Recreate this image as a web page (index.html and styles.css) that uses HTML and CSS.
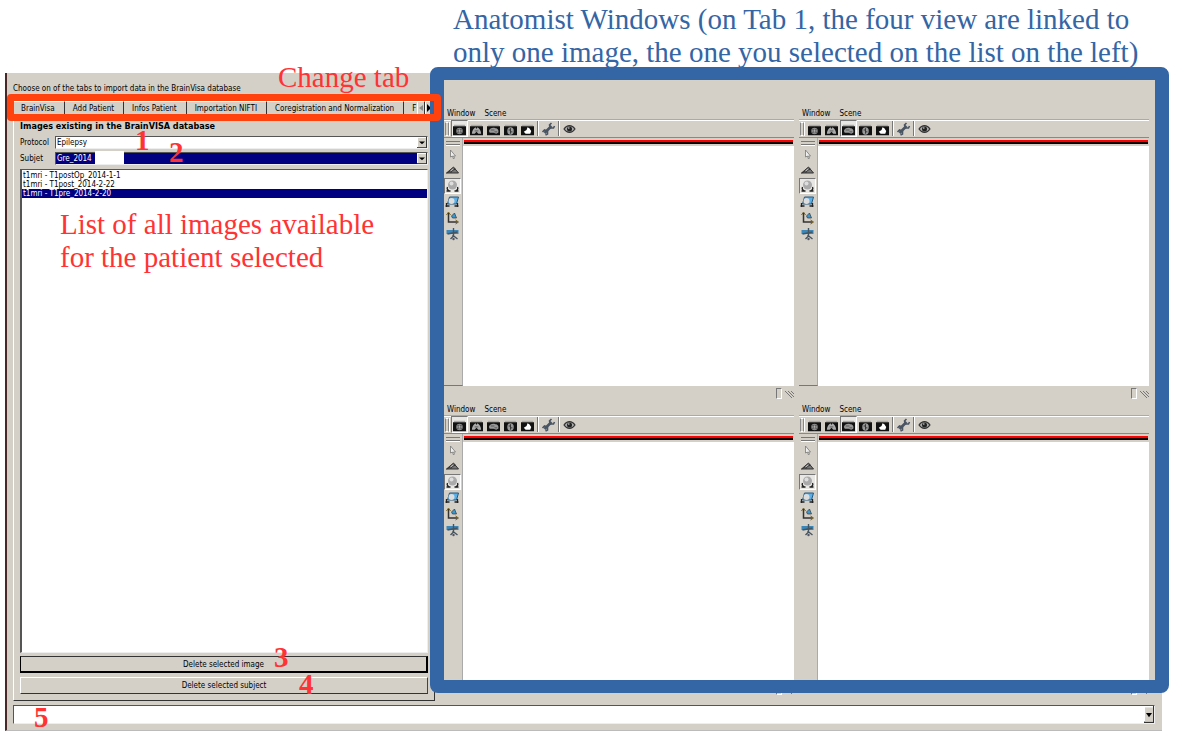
FILE: index.html
```html
<!DOCTYPE html>
<html lang="en">
<head>
<meta charset="utf-8">
<title>BrainVisa database import</title>
<link rel="stylesheet" href="styles.css">
</head>
<body>
<svg class="defs" aria-hidden="true">
  <symbol id="cam" viewBox="0 0 14 12"><path fill="#aaa" d="M1 0h12v2H1z"/><path fill="#111" d="M0 2h14v10H0z"/></symbol>
  <symbol id="axial" viewBox="0 0 14 12"><use href="#cam"/><circle cx="7" cy="7" r="3.5" fill="#888"/><path stroke="#333" d="M5 5l4 4M9 5l-4 4"/><circle cx="7" cy="7" r="1" fill="#bbb"/></symbol>
  <symbol id="coronal" viewBox="0 0 14 12"><use href="#cam"/><path fill="#aaa" d="M2 10c0-3 2-6 4-7l1 2 1-2c2 1 4 4 4 7H9L7 8l-2 2z"/><path stroke="#555" d="M5 7h4"/></symbol>
  <symbol id="sagittal" viewBox="0 0 14 12"><use href="#cam"/><path fill="#999" d="M2 7c1-3 4-4 7-3 3 0 4 3 3 5l-2 1-3-1-4 0z"/><path stroke="#555" d="M4 6h4M8 8h3"/></symbol>
  <symbol id="oblique" viewBox="0 0 14 12"><use href="#cam"/><ellipse cx="7" cy="7" rx="3.5" ry="4" fill="#999"/><path stroke="#333" fill="none" d="M7 4v6M5 6h2M7 8h2"/></symbol>
  <symbol id="three" viewBox="0 0 14 12"><use href="#cam"/><path fill="#fff" d="M3 8l3-2 1-3 2 1 2 3-1 3H5z"/></symbol>
  <symbol id="wrench" viewBox="0 0 14 14"><path d="M3 11l7-7" stroke="#4a5563" stroke-width="2.6"/><path d="M10 1L8 3l1 3 3 0 1-2M1 10l2-2 3 1 0 3-2 1" stroke="#4a5563" stroke-width="1.6" fill="none"/></symbol>
  <symbol id="eye" viewBox="0 0 15 14"><path d="M2 7c3-4.500 8-4.500 11 0-3 4.500-8 4.500-11 0z" fill="#aaa" stroke="#333" stroke-width="1.200"/><circle cx="7.500" cy="7" r="2.500" fill="#222"/><path d="M6 6h1.500" stroke="#eee"/></symbol>
  <symbol id="arrow" viewBox="0 0 14 14"><path d="M5 3v7l2-1 1 3 1-1-1-2h2z" fill="#eee" stroke="#777" stroke-width=".8"/></symbol>
  <symbol id="plane" viewBox="0 0 14 14"><path d="M1 10l7-6 5 6z" fill="#777"/><path d="M1 10l7-6 5 6zM1 10l9-4M5 10l4-5" stroke="#333" fill="none"/><path d="M5 8l3-2" stroke="#ccc"/></symbol>
  <symbol id="ball" viewBox="0 0 14 14"><circle cx="7" cy="6" r="4.500" fill="#aaa"/><circle cx="6" cy="4.500" r="2" fill="#ddd"/><path d="M2 8c-1 2 0 3 2 4M12 8c1 2 0 3-2 4M1 12h4M9 12h4" stroke="#222" stroke-width="1.300" fill="none"/></symbol>
  <symbol id="slice" viewBox="0 0 14 14"><path d="M4 2h9l-2 7H2z" fill="#5bb0e8" stroke="#24587e"/><circle cx="6" cy="6" r="3" fill="#ddd"/><path d="M1 8v4M0 11h4M12 8v4M9 11h4" stroke="#222" stroke-width="1.300" fill="none"/></symbol>
  <symbol id="axes" viewBox="0 0 14 14"><path d="M3 2v9h9" stroke="#333" stroke-width="1.500" fill="none"/><path d="M1 4l2-3 2 3M10 9l3 2-3 2" stroke="#75601c" fill="none"/><path d="M6 5l3-3 2 5H7z" fill="#3b9bd0" stroke="#333" stroke-width=".7"/></symbol>
  <symbol id="cut" viewBox="0 0 14 14"><path d="M1 3h6l6 0v4H1z" fill="#3c86b8"/><path d="M8 1v8l-3 3M7 8l5 4M2 7l10-2" stroke="#445461" stroke-width="1.400" fill="none"/><circle cx="8" cy="12" r="1.200" fill="#556"/></symbol>
</svg>
<div class="page">
  <main class="app">
    <div class="main">
      <section class="left">
        <p class="intro">Choose on of the tabs to import data in the BrainVisa database</p>
        <div class="tabbar">
          <div class="tabs" role="tablist">
            <button class="tab active" role="tab">BrainVisa</button>
            <button class="tab" role="tab">Add Patient</button>
            <button class="tab" role="tab">Infos Patient</button>
            <button class="tab" role="tab">Importation NIFTI</button>
            <button class="tab" role="tab">Coregistration and Normalization</button>
            <button class="tab cut" role="tab">F</button>
          </div>
          <button class="scroll dim" aria-label="Previous tabs"><svg viewBox="0 0 6 8"><path d="M5 1v6L1 4z"/></svg></button>
          <button class="scroll" aria-label="Next tabs"><svg viewBox="0 0 6 8"><path d="M1 0v8l4-4z"/></svg></button>
          <span class="tab-mark"></span>
          <span class="note tab-note">Change tab</span>
        </div>
        <div class="panel">
          <h1 class="title">Images existing in the BrainVISA database</h1>
          <div class="field">
            <label for="protocol">Protocol</label>
            <select id="protocol" class="combo"><option>Epilepsy</option></select>
            <b class="num n1">1</b>
          </div>
          <div class="field">
            <label for="subject">Subjet</label>
            <select id="subject" class="combo selected"><option>Gre_2014</option></select>
            <span class="mask"></span>
            <b class="num n2">2</b>
          </div>
          <div class="list" role="listbox" aria-label="Images">
            <div class="item" role="option">t1mri - T1postOp_2014-1-1</div>
            <div class="item" role="option">t1mri - T1post_2014-2-22</div>
            <div class="item current" role="option" aria-selected="true">t1mri - T1pre_2014-2-20</div>
            <p class="note list-note">List of all images available<br>for the patient selected</p>
          </div>
          <div class="action"><button class="push default">Delete selected image</button><b class="num n3">3</b></div>
          <div class="action"><button class="push">Delete selected subject</button><b class="num n4">4</b></div>
        </div>
      </section>
      <section class="right">
        <div class="views" id="views"></div>
        <p class="note head-note">Anatomist Windows (on Tab 1, the four view are linked to<br>only one image, the one you selected on the list on the left)</p>
        <span class="frame"></span>
      </section>
    </div>
    <div class="bottom">
      <select class="combo wide" aria-label="Command"><option></option></select>
      <b class="num n5">5</b>
    </div>
  </main>
</div>
<script src="views.js"></script>
</body>
</html>
```
FILE: styles.css
```css
* { box-sizing: border-box; }
body { margin: 0; background: #fff; color: #000; font: 8px/10px "DejaVu Sans Condensed", "DejaVu Sans", sans-serif; }
p, h1 { margin: 0; }
button, select { font: inherit; color: inherit; border-radius: 0; margin: 0; }
svg { display: block; }
.defs { position: absolute; width: 0; height: 0; }
.page { min-height: 100vh; padding: 73px 20px 6px 5px; display: flex; flex-direction: column; }
.app { flex: 1; display: flex; flex-direction: column; background: #d4d0c8; border-left: 2px solid #4a2828; border-bottom: 1px solid #bbb; padding: 0 7px 6px 6px; }
.main { flex: 1; display: grid; grid-template-columns: 422px 1fr; gap: 9px; }
.left { display: flex; flex-direction: column; padding-top: 11px; min-width: 0; }
.intro { height: 17px; white-space: nowrap; }
.tabbar { position: relative; display: flex; height: 14px; padding-right: 2px; }
.tabs { flex: 1; min-width: 0; display: flex; overflow: hidden; }
.tab { flex: none; background: #d4d0c8; border: 0; border-top: 1px solid #fff; border-right: 1px solid #333; padding: 1px 9px 0 8px; white-space: nowrap; line-height: 12px; }
.tab.active { border-left: 1px solid #fff; padding-left: 7px; }
.tab.cut { border-right: 0; }
.scroll { flex: none; width: 8px; padding: 0; border: 1px solid; border-color: #fff #333 #777 #fff; background: #d4d0c8; }
.scroll svg { width: 6px; height: 8px; }
.scroll.dim svg { fill: #888; }
.tab-mark { position: absolute; inset: -7px -6px -6px -6px; border: 7px solid #ff420e; border-radius: 4px; z-index: 3; }
.note { font: 29px/33px "Liberation Serif", serif; color: #ff3333; white-space: nowrap; }
.tab-note { position: absolute; left: 265px; top: -40px; z-index: 4; }
.panel { flex: 1; display: flex; flex-direction: column; border: 1px solid; border-color: #d4d0c8 #333 #333 #fff; padding: 5px 6px 6px; margin-bottom: 4px; }
.title { font-size: 9px; line-height: 11px; height: 15px; white-space: nowrap; }
.field { position: relative; display: grid; grid-template-columns: 34px 1fr; gap: 1px; align-items: center; margin-bottom: 3px; }
.combo { appearance: none; width: 100%; height: 13px; padding: 0 12px 0 1px; border: 1px solid; border-color: #555 #eee #eee #555; line-height: 10px; background: #fff url("data:image/svg+xml,%3Csvg xmlns='http://www.w3.org/2000/svg' viewBox='0 0 10 12' preserveAspectRatio='none'%3E%3Cpath fill='%23333' d='M0 0h10v12H0z'/%3E%3Cpath fill='%23fff' d='M0 0h9v11H0z'/%3E%3Cpath fill='%23d4d0c8' d='M1 1h8v10H1z'/%3E%3Cpath d='M2 5h6L5 8z'/%3E%3C/svg%3E") right / 10px 100% no-repeat; }
.selected { color: #fff; background-color: #000080; }
.mask { position: absolute; left: 75px; top: -1px; width: 29px; height: 13px; background: #fff; z-index: 1; }
.num { position: absolute; font: bold 29px/33px "Liberation Serif", serif; color: #ff3333; z-index: 2; }
.n1 { left: 115px; top: -12px; }
.n2 { left: 149px; top: -16px; }
.n3 { left: 254px; top: -15px; }
.n4 { left: 279px; top: -9px; }
.n5 { left: 21px; top: -4px; }
.list { position: relative; flex: 1; background: #fff; border: 1px solid; border-color: #555 #eee #eee #555; border-left-width: 2px; padding-top: 1px; margin: 1px 0 3px; }
.item { height: 9px; line-height: 9px; padding-left: 1px; }
.current { background: #000080; color: #fff; }
.list-note { position: absolute; left: 38px; top: 38px; }
.action { position: relative; display: flex; margin-bottom: 4px; }
.action:last-child { margin-bottom: 0; }
.push { flex: 1; height: 17px; padding: 1px 0 0; background: #d4d0c8; border: 1px solid; border-color: #fff #444 #333 #fff; }
.push.default { border-color: #333 #000 #000; border-width: 1px 2px 2px 1px; }
.bottom { position: relative; display: flex; }
.combo.wide { height: 19px; }
.right { position: relative; min-width: 0; display: flex; padding: 33px 6px 7px 0; }
.frame { position: absolute; inset: -6px -14px 12px -14px; border: 13px solid #3465a4; border-left-width: 14px; border-right-width: 14px; border-radius: 8px; z-index: 2; }
.head-note { position: absolute; left: 9px; top: -70px; color: #3465a4; z-index: 3; }
.views { flex: 1; display: grid; grid-template: 1fr 1fr / 1fr 1fr; column-gap: 5px; }
.view { display: flex; flex-direction: column; min-width: 0; }
.menu { display: flex; height: 13px; gap: 9px; padding: 2px 3px 0; }
.menu button { border: 0; background: none; padding: 0; line-height: 10px; }
.tools { display: flex; align-items: center; height: 19px; border-top: 1px solid #aaa; border-bottom: 1px solid #888; box-shadow: inset 0 1px #fff; }
.grip { width: 4px; height: 14px; margin: 0 2px 0 1px; border: 1px solid; border-color: #fff #888; box-shadow: 1px 0 #fff; }
.tool { flex: none; width: 17px; height: 17px; padding: 2px 1px 0; border: 1px solid transparent; background: none; }
.tool svg { width: 13px; height: 12px; }
.tool.on, .mode.on { border-color: #777 #fff #fff #777; background: #e9e7e3; }
.tool.big { padding: 0; }
.tool.big svg { width: 15px; height: 14px; }
.sep { width: 2px; height: 15px; margin: 0 1px; border-left: 1px solid #777; border-right: 1px solid #fff; }
.work { flex: 1; display: grid; grid-template-columns: 19px 1fr; }
.modes { display: flex; flex-direction: column; border-right: 1px solid #aaa; border-bottom: 1px solid #777; }
.modes .bar { width: 14px; height: 4px; margin: 3px 0 1px 2px; border: solid #777; border-width: 1px 0; box-shadow: 0 1px #fff; }
.mode { width: 17px; height: 16px; padding: 0; border: 1px solid transparent; background: none; }
.mode svg { width: 15px; height: 14px; }
.scene { display: flex; flex-direction: column; padding-top: 2px; }
.line { height: 4px; border-top: 2px solid #f00; background: #100; margin: 0 1px; }
.canvas { flex: 1; background: #fff; margin-top: 2px; }
.status { height: 16px; display: flex; justify-content: flex-end; gap: 3px; padding-top: 2px; }
.status i { width: 6px; height: 11px; border: 1px solid; border-color: #777 #fff #fff #777; }
.status svg { width: 9px; height: 11px; stroke: #777; }
@media (max-width: 900px) { .main { grid-template-columns: 1fr 1fr; } }
```
FILE: views.js
```js
const icon = id => `<svg aria-hidden="true"><use href="#${id}"/></svg>`;
const tools = ["axial", "coronal", "sagittal", "oblique", "three"];
const modes = ["arrow", "plane", "ball", "slice", "axes", "cut"];
const view = pressed => `
<article class="view">
  <nav class="menu"><button>Window</button><button>Scene</button></nav>
  <div class="tools"><span class="grip"></span>
    ${tools.map(t => `<button class="tool${t === pressed ? " on" : ""}" aria-label="${t}">${icon(t)}</button>`).join("")}
    <span class="sep"></span><button class="tool big" aria-label="settings">${icon("wrench")}</button>
    <span class="sep"></span><button class="tool big" aria-label="visibility">${icon("eye")}</button>
  </div>
  <div class="work">
    <div class="modes"><span class="bar"></span>
      ${modes.map(m => `<button class="mode${m === "ball" ? " on" : ""}" aria-label="${m}">${icon(m)}</button>`).join("")}
    </div>
    <div class="scene"><div class="line"></div><div class="canvas"></div></div>
  </div>
  <div class="status"><i></i><svg viewBox="0 0 9 11"><path d="M0 3l7 7M3 3l6 6M6 3l3 3"/></svg></div>
</article>`;
document.getElementById("views").innerHTML = ["axial", "sagittal", "axial", "sagittal"].map(view).join("");
```
